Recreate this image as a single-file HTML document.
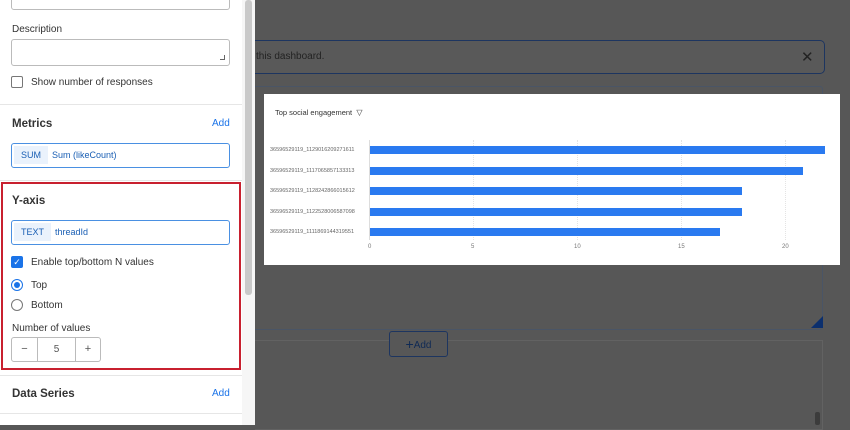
<!DOCTYPE html>
<html><head><style>
*{box-sizing:border-box;margin:0;padding:0}
body{width:850px;height:425px;overflow:hidden;font-family:"Liberation Sans",sans-serif;background:#575757;position:relative}
.abs{position:absolute}
.panel{left:0;top:0;width:242px;height:425px;background:#fff}
.lbl{font-size:10px;color:#333}
.inp{border:1px solid #bbb;border-radius:3px;background:#fff}
.h{font-size:11.5px;font-weight:bold;color:#333}
.add{font-size:10px;color:#1a73e8}
.pill{border:1px solid #4a90e2;border-radius:3px;font-size:9px;color:#1a5fb4}
.tag{display:inline-block;background:#eaf2fc;padding:4px 7px;margin:2px 4px 2px 2px}
.bar{height:8px;background:#2a7af0;left:370px}
.xt{font-size:6px;color:#777;top:244px}
</style></head><body>
<!-- dark area -->
<div class="abs" style="left:255px;top:40px;width:570px;height:34px;border:1px solid #1d3560;border-left:none;border-radius:0 5px 5px 0;background:#595959"></div>
<div class="abs" style="left:256px;top:51px;font-size:10px;color:#222">this dashboard.</div>
<div class="abs" style="left:801px;top:48px;font-size:15px;color:#222">✕</div>
<div class="abs" style="left:255px;top:86px;width:568px;height:244px;border:1px solid #4a5566;border-left:none;border-radius:0 3px 3px 0"></div>
<div class="abs" style="left:811px;top:316px;width:0;height:0;border-left:12px solid transparent;border-bottom:12px solid #0b2f6e"></div>
<div class="abs" style="left:255px;top:340px;width:568px;height:90px;border:1px solid #626262;border-left:none;background:#575757"></div>
<div class="abs" style="left:389px;top:331px;width:59px;height:26px;border:1px solid #1d3560;border-radius:3px;background:#575757;font-size:10px;color:#0f2a55;line-height:24px;text-align:center"><span style="font-size:14px;vertical-align:-1px">+</span>Add</div>
<div class="abs" style="left:815px;top:412px;width:5px;height:13px;background:#3c3c3c;border-radius:2px"></div>
<!-- panel -->
<div class="abs panel"></div>
<div class="abs inp" style="left:11px;top:-10px;width:219px;height:20px"></div>
<div class="abs lbl" style="left:12px;top:24px">Description</div>
<div class="abs inp" style="left:11px;top:39px;width:219px;height:27px"></div>
<div class="abs" style="left:220px;top:55px;width:5px;height:5px;border-right:1px solid #666;border-bottom:1px solid #666"></div>
<div class="abs" style="left:11px;top:76px;width:12px;height:12px;border:1px solid #777;border-radius:2px"></div>
<div class="abs lbl" style="left:31px;top:77px">Show number of responses</div>
<div class="abs" style="left:0;top:104px;width:242px;height:1px;background:#e6e6e6"></div>
<div class="abs h" style="left:12px;top:118px">Metrics</div>
<div class="abs add" style="left:212px;top:118px">Add</div>
<div class="abs pill" style="left:11px;top:143px;width:219px;height:25px"><span class="tag">SUM</span>Sum (likeCount)</div>
<div class="abs" style="left:0;top:180px;width:242px;height:1px;background:#e6e6e6"></div>
<div class="abs" style="left:1px;top:182px;width:240px;height:188px;border:2px solid #c8202f"></div>
<div class="abs h" style="left:12px;top:195px">Y-axis</div>
<div class="abs pill" style="left:11px;top:220px;width:219px;height:25px"><span class="tag">TEXT</span>threadId</div>
<div class="abs" style="left:11px;top:256px;width:12px;height:12px;background:#1a73e8;border-radius:2px;color:#fff;font-size:9px;line-height:12px;text-align:center">✓</div>
<div class="abs lbl" style="left:31px;top:257px">Enable top/bottom N values</div>
<div class="abs" style="left:11px;top:279px;width:12px;height:12px;border:1px solid #1a73e8;border-radius:50%"><div style="margin:2px;width:6px;height:6px;border-radius:50%;background:#1a73e8"></div></div>
<div class="abs lbl" style="left:31px;top:280px">Top</div>
<div class="abs" style="left:11px;top:299px;width:12px;height:12px;border:1px solid #777;border-radius:50%"></div>
<div class="abs lbl" style="left:31px;top:300px">Bottom</div>
<div class="abs lbl" style="left:12px;top:323px">Number of values</div>
<div class="abs inp" style="left:11px;top:337px;width:90px;height:25px;display:flex;font-size:11px;color:#555;line-height:23px;text-align:center"><div style="width:26px;border-right:1px solid #bbb">−</div><div style="width:38px;border-right:1px solid #bbb;font-size:10px">5</div><div style="width:24px">+</div></div>
<div class="abs" style="left:0;top:375px;width:242px;height:1px;background:#e6e6e6"></div>
<div class="abs h" style="left:12px;top:388px">Data Series</div>
<div class="abs add" style="left:212px;top:388px">Add</div>
<div class="abs" style="left:0;top:413px;width:242px;height:1px;background:#e6e6e6"></div>
<div class="abs" style="left:242px;top:0;width:13px;height:425px;background:#f6f6f6"></div>
<div class="abs" style="left:245px;top:0;width:7px;height:295px;background:#c9c9c9;border-radius:3px"></div>
<!-- chart -->
<div class="abs" style="left:264px;top:94px;width:576px;height:171px;background:#fff"></div>
<div class="abs" style="left:275px;top:108px;font-size:7.5px;color:#333">Top social engagement &nbsp;<span style="font-size:8px">▽</span></div>
<div class="abs" style="left:473px;top:140px;width:0;height:100px;border-left:1px dotted #e4e4e4"></div>
<div class="abs" style="left:577px;top:140px;width:0;height:100px;border-left:1px dotted #e4e4e4"></div>
<div class="abs" style="left:681px;top:140px;width:0;height:100px;border-left:1px dotted #e4e4e4"></div>
<div class="abs" style="left:785px;top:140px;width:0;height:100px;border-left:1px dotted #e4e4e4"></div>
<div class="abs" style="left:369px;top:140px;width:1px;height:100px;background:#ddd"></div>
<div class="abs" style="left:270px;top:140px;font-size:5.5px;color:#666;line-height:20.5px">36596529119_1129016209271611<br>36596529119_1117065857133313<br>36596529119_1128242866015612<br>36596529119_1122528006587098<br>36596529119_1111869144319551</div>
<div class="abs bar" style="top:146px;width:455px"></div>
<div class="abs bar" style="top:167px;width:433px"></div>
<div class="abs bar" style="top:187px;width:372px"></div>
<div class="abs bar" style="top:208px;width:372px"></div>
<div class="abs bar" style="top:228px;width:350px"></div>
<div class="abs xt" style="left:368px">0</div>
<div class="abs xt" style="left:471px">5</div>
<div class="abs xt" style="left:574px">10</div>
<div class="abs xt" style="left:678px">15</div>
<div class="abs xt" style="left:782px">20</div>
</body></html>
